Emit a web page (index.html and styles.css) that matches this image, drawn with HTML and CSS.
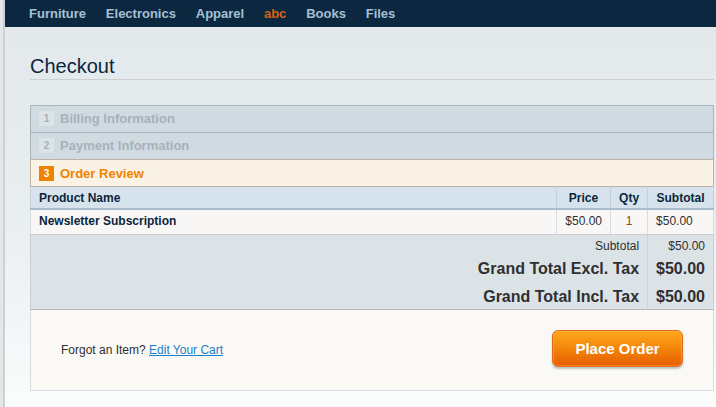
FILE: index.html
```html
<!DOCTYPE html>
<html>
<head>
<meta charset="utf-8">
<link rel="stylesheet" href="styles.css">
</head>
<body>
<div class="nav">
  <a class="nav-item">Furniture</a>
  <a class="nav-item">Electronics</a>
  <a class="nav-item">Apparel</a>
  <a class="nav-item active">abc</a>
  <a class="nav-item">Books</a>
  <a class="nav-item">Files</a>
</div>
<div class="main">
  <h1 class="title">Checkout</h1>
  <div class="box">
    <div class="step"><span class="num">1</span><span class="step-title">Billing Information</span></div>
    <div class="step"><span class="num">2</span><span class="step-title">Payment Information</span></div>
    <div class="step current"><span class="num">3</span><span class="step-title">Order Review</span></div>
    <table class="items">
      <thead>
        <tr><th class="c-name">Product Name</th><th class="c-price">Price</th><th class="c-qty">Qty</th><th class="c-sub">Subtotal</th></tr>
      </thead>
      <tbody>
        <tr><td class="c-name">Newsletter Subscription</td><td class="c-price">$50.00</td><td class="c-qty">1</td><td class="c-sub">$50.00</td></tr>
      </tbody>
      <tfoot>
        <tr class="small"><td colspan="3" class="t-label">Subtotal</td><td class="t-val">$50.00</td></tr>
        <tr class="big"><td colspan="3" class="t-label">Grand Total Excl. Tax</td><td class="t-val">$50.00</td></tr>
        <tr class="big t-last"><td colspan="3" class="t-label">Grand Total Incl. Tax</td><td class="t-val">$50.00</td></tr>
      </tfoot>
    </table>
    <div class="review-foot">
      <p class="forgot">Forgot an Item? <a class="edit">Edit Your Cart</a></p>
      <button class="place">Place Order</button>
    </div>
  </div>
</div>
</body>
</html>
```
FILE: styles.css
```css
html, body { margin: 0; padding: 0; }
body {
  font-family: "Liberation Sans", Arial, sans-serif;
  background: linear-gradient(180deg, #e2e8eb 0%, #e9eef0 55%, #fbfcfc 100%);
  height: 407px;
  overflow: hidden;
  border-left: 3px solid #e3e7e9;
  box-sizing: border-box;
  position: relative;
}
body::before {
  content: "";
  position: absolute;
  left: 0; top: 0; bottom: 0;
  width: 2px;
  background: #cfd0cf;
}
.nav {
  height: 27px;
  background: #0c2840;
  display: flex;
  align-items: center;
  gap: 19.8px;
  padding-left: 29px;
  margin-left: -3px;
}
.nav-item {
  color: #a5c0d4;
  font-weight: bold;
  font-size: 13px;
  line-height: 27px;
}
.nav-item.active { color: #d8620f; }
.main {
  padding: 27px 2px 0 27px;
}
.title {
  margin: 0;
  font-weight: normal;
  font-size: 20px;
  line-height: 24px;
  color: #0a263c;
  border-bottom: 1px solid #cbcfd2;
  height: 25px;
}
.box {
  margin-top: 25px;
  width: 684px;
}
.step {
  height: 26px;
  background: #d0dae1;
  border: 1px solid #a9b5bc;
  border-bottom: none;
  display: flex;
  align-items: center;
  padding-left: 8px;
  gap: 6px;
}
.step .step-title { position: relative; top: -1px; }
.step .num { position: relative; top: -1px; }
.step.current .step-title, .step.current .num { top: 0; }
.num {
  width: 15px;
  height: 15px;
  background: #dce4e8;
  color: #a6b2b9;
  font-size: 10px;
  font-weight: bold;
  display: flex;
  align-items: center;
  justify-content: center;
}
.step-title {
  font-size: 13px;
  font-weight: bold;
  color: #a6b2ba;
}
.step.current {
  background: #faf3e5;
  border-color: #bdb3a4;
}
.step.current .num {
  background: #f18200;
  color: #fff;
}
.step.current .step-title { color: #f18200; }
.items {
  width: 684px;
  border-collapse: collapse;
  font-size: 12px;
}
.items th {
  background: #d7e3ec;
  color: #0a263c;
  font-weight: bold;
  height: 21px;
  padding: 0 8px;
  border: 1px solid #c2d0db;
  border-top: 1px solid #bdb3a4;
  border-bottom: 2px solid #a9bccb;
  line-height: 14px;
}
.items th.c-name { text-align: left; border-left-color: #c8d2da; }
.items tbody td {
  background: #f8f7f5;
  color: #2f2f2f;
  height: 22px;
  padding: 0 8px 2px;
  border: 1px solid #d7dde2;
  border-bottom: 1px solid #c8cfd4;
  line-height: 14px;
}
.items td.c-name { font-weight: bold; color: #0a263c; }
.items th.c-price { width: 37px; }
.items th.c-qty { width: 20px; }
.items th.c-sub { width: 48px; }
.items td.c-price { text-align: right; }
.items td.c-qty { text-align: center; color: #8a4a1c; }
.items td.c-sub { text-align: left; }
.items tfoot td {
  background: #dce3e7;
  color: #2f2f2f;
  text-align: right;
  padding: 0 8px;
  vertical-align: middle;
}
.items tfoot .t-label { border-left: 1px solid #c8d0d6; border-right: 1px solid #cfd7dc; }
.items tfoot .t-val { border-right: 1px solid #c8d0d6; }
.items tfoot .small td { font-size: 12px; height: 21px; line-height: 14px; }
.items tfoot .big td { font-size: 16px; font-weight: bold; height: 26px; line-height: 18px; }
.items tfoot .t-last td { border-bottom: 1px solid #b6b7b4; height: 25px; padding-top: 2px; }
.review-foot {
  height: 80px;
  background: #faf9f6;
  border: 1px solid #d9d9e1;
  border-top: none;
  display: flex;
  align-items: center;
  justify-content: space-between;
  padding: 0 30px 0 30px;
}
.forgot {
  margin: 0;
  font-size: 12px;
  color: #2f2f2f;
}
.edit {
  color: #1e7ec8;
  text-decoration: underline;
}
.place {
  width: 131px;
  height: 37px;
  border: 1px solid #e06a1b;
  border-radius: 6px;
  background: linear-gradient(180deg, #fda81d 0%, #f48a0c 45%, #e65d00 100%);
  color: #fff;
  font-family: "Liberation Sans", Arial, sans-serif;
  font-weight: bold;
  font-size: 15px;
  box-shadow: 0 2px 2px rgba(120, 130, 140, 0.45), inset 0 0 0 1px rgba(255, 200, 120, 0.35);
  margin-top: -3px;
  padding: 0;
}
```
